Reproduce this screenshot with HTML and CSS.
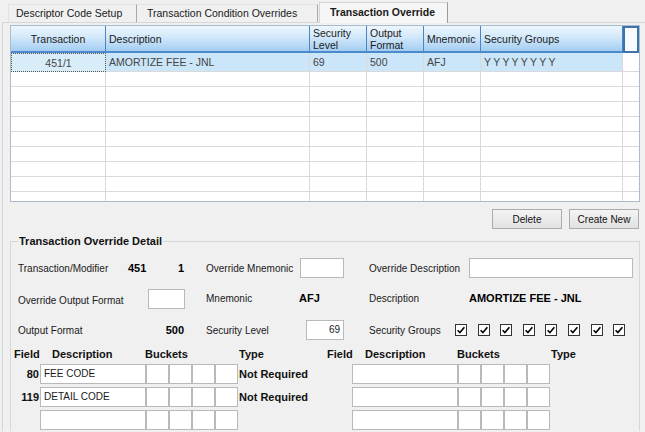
FILE: index.html
```html
<!DOCTYPE html>
<html>
<head>
<meta charset="utf-8">
<title>Transaction Override</title>
<link rel="stylesheet" href="styles.css">
</head>
<body>
<div class="tabs">
  <div class="tab first">Descriptor Code Setup</div>
  <div class="tab second">Transaction Condition Overrides</div>
  <div class="tab active">Transaction Override</div>
</div>
<div class="panel">
  <div class="grid">
    <div class="hd center">Transaction</div>
    <div class="hd">Description</div>
    <div class="hd two">Security<br>Level</div>
    <div class="hd two">Output<br>Format</div>
    <div class="hd">Mnemonic</div>
    <div class="hd">Security Groups</div>
    <div class="hd corner"></div>

    <div class="cell sel focus center">451/1</div>
    <div class="cell sel">AMORTIZE FEE - JNL</div>
    <div class="cell sel">69</div>
    <div class="cell sel">500</div>
    <div class="cell sel">AFJ</div>
    <div class="cell sel ys">YYYYYYYY</div>
    <div class="cell last"></div>

    <div class="cell"></div><div class="cell"></div><div class="cell"></div><div class="cell"></div><div class="cell"></div><div class="cell"></div><div class="cell last"></div>
    <div class="cell"></div><div class="cell"></div><div class="cell"></div><div class="cell"></div><div class="cell"></div><div class="cell"></div><div class="cell last"></div>
    <div class="cell"></div><div class="cell"></div><div class="cell"></div><div class="cell"></div><div class="cell"></div><div class="cell"></div><div class="cell last"></div>
    <div class="cell"></div><div class="cell"></div><div class="cell"></div><div class="cell"></div><div class="cell"></div><div class="cell"></div><div class="cell last"></div>
    <div class="cell"></div><div class="cell"></div><div class="cell"></div><div class="cell"></div><div class="cell"></div><div class="cell"></div><div class="cell last"></div>
    <div class="cell"></div><div class="cell"></div><div class="cell"></div><div class="cell"></div><div class="cell"></div><div class="cell"></div><div class="cell last"></div>
    <div class="cell"></div><div class="cell"></div><div class="cell"></div><div class="cell"></div><div class="cell"></div><div class="cell"></div><div class="cell last"></div>
    <div class="cell"></div><div class="cell"></div><div class="cell"></div><div class="cell"></div><div class="cell"></div><div class="cell"></div><div class="cell last"></div>
    <div class="cell end"></div><div class="cell end"></div><div class="cell end"></div><div class="cell end"></div><div class="cell end"></div><div class="cell end"></div><div class="cell end last"></div>
  </div>

  <div class="actions">
    <button class="btn">Delete</button>
    <button class="btn">Create New</button>
  </div>

  <fieldset class="detail">
    <legend>Transaction Override Detail</legend>
    <div class="form">
      <div class="pair"><span class="plabel">Transaction/Modifier</span><b>451</b></div>
      <div class="right"><b>1</b></div>
      <div></div>
      <div>Override Mnemonic</div>
      <div class="box w44"></div>
      <div></div>
      <div>Override Description</div>
      <div class="box w164"></div>

      <div class="lower">Override Output Format</div>
      <div class="box w37"></div>
      <div></div>
      <div class="upper">Mnemonic</div>
      <div class="upper"><b class="afj">AFJ</b></div>
      <div></div>
      <div class="upper">Description</div>
      <div class="upper"><b>AMORTIZE FEE - JNL</b></div>

      <div>Output Format</div>
      <div class="right"><b>500</b></div>
      <div></div>
      <div>Security Level</div>
      <div class="box w38 end num">69</div>
      <div></div>
      <div class="groups">
        <span class="glabel">Security Groups</span>
        <span class="checks">
          <span class="chk"><svg viewBox="0 0 12 12" width="12" height="12"><path d="M2.6 6.2 L4.9 8.6 L9.4 3.2" fill="none" stroke="#000" stroke-width="1.6"/></svg></span>
          <span class="chk"><svg viewBox="0 0 12 12" width="12" height="12"><path d="M2.6 6.2 L4.9 8.6 L9.4 3.2" fill="none" stroke="#000" stroke-width="1.6"/></svg></span>
          <span class="chk"><svg viewBox="0 0 12 12" width="12" height="12"><path d="M2.6 6.2 L4.9 8.6 L9.4 3.2" fill="none" stroke="#000" stroke-width="1.6"/></svg></span>
          <span class="chk"><svg viewBox="0 0 12 12" width="12" height="12"><path d="M2.6 6.2 L4.9 8.6 L9.4 3.2" fill="none" stroke="#000" stroke-width="1.6"/></svg></span>
          <span class="chk"><svg viewBox="0 0 12 12" width="12" height="12"><path d="M2.6 6.2 L4.9 8.6 L9.4 3.2" fill="none" stroke="#000" stroke-width="1.6"/></svg></span>
          <span class="chk"><svg viewBox="0 0 12 12" width="12" height="12"><path d="M2.6 6.2 L4.9 8.6 L9.4 3.2" fill="none" stroke="#000" stroke-width="1.6"/></svg></span>
          <span class="chk"><svg viewBox="0 0 12 12" width="12" height="12"><path d="M2.6 6.2 L4.9 8.6 L9.4 3.2" fill="none" stroke="#000" stroke-width="1.6"/></svg></span>
          <span class="chk"><svg viewBox="0 0 12 12" width="12" height="12"><path d="M2.6 6.2 L4.9 8.6 L9.4 3.2" fill="none" stroke="#000" stroke-width="1.6"/></svg></span>
        </span>
      </div>
    </div>

    <div class="fields">
      <div class="fh">Field</div>
      <div class="fh dl">Description</div>
      <div class="fh bk">Buckets</div>
      <div class="fh ty">Type</div>
      <div class="fh">Field</div>
      <div class="fh dr">Description</div>
      <div class="fh bk">Buckets</div>
      <div class="fh ty">Type</div>

      <div class="fnum">80</div>
      <div class="box desc">FEE CODE</div>
      <div class="box"></div><div class="box"></div><div class="box"></div><div class="box"></div>
      <div class="ftype">Not Required</div>
      <div></div>
      <div class="box desc"></div>
      <div class="box"></div><div class="box"></div><div class="box"></div><div class="box"></div>
      <div></div>

      <div class="fnum">119</div>
      <div class="box desc">DETAIL CODE</div>
      <div class="box"></div><div class="box"></div><div class="box"></div><div class="box"></div>
      <div class="ftype">Not Required</div>
      <div></div>
      <div class="box desc"></div>
      <div class="box"></div><div class="box"></div><div class="box"></div><div class="box"></div>
      <div></div>

      <div class="fnum"></div>
      <div class="box desc"></div>
      <div class="box"></div><div class="box"></div><div class="box"></div><div class="box"></div>
      <div></div>
      <div></div>
      <div class="box desc"></div>
      <div class="box"></div><div class="box"></div><div class="box"></div><div class="box"></div>
      <div></div>
    </div>
  </fieldset>
</div>
</body>
</html>
```
FILE: styles.css
```css
* { box-sizing: border-box; }

html, body {
  margin: 0;
  padding: 0;
}

body {
  width: 645px;
  height: 432px;
  overflow: hidden;
  background: #f0f0f0;
  font-family: "Liberation Sans", Arial, sans-serif;
  font-size: 11px;
  color: #000;
}

/* ---------- tabs ---------- */
.tabs {
  display: flex;
  align-items: flex-end;
  height: 22px;
  padding-left: 8px;
  font-size: 10.5px;
}

.tab {
  height: 18px;
  line-height: 17px;
  padding-left: 10px;
  background: #f0f0f0;
  border-top: 1px solid #e2e2e2;
  border-right: 1px solid #a8a8a8;
  color: #1a1a1a;
  white-space: nowrap;
}

.tab.first {
  width: 129px;
  padding-left: 7px;
  border-left: 1px solid #e2e2e2;
}

.tab.second {
  width: 181px;
}

.tab.active {
  position: relative;
  top: 1px;
  width: 129px;
  height: 21px;
  line-height: 18px;
  margin-left: 1px;
  font-weight: bold;
  background: #f6f6f6;
  border-top: 1px solid #d4d4d4;
  border-left: 1px solid #d4d4d4;
  border-right: 1px solid #9c9c9c;
}

/* ---------- panel ---------- */
.panel {
  margin-left: 2px;
  border-left: 1px solid #d6d6d6;
  border-top: 1px solid #d6d6d6;
  padding: 2px 0 0 7px;
  height: 409px;
  overflow: hidden;
}

/* ---------- data grid ---------- */
.grid {
  width: 630px;
  display: grid;
  grid-template-columns: 95px 204px 57px 57px 57px 142px 16px;
  grid-template-rows: 27px 19px repeat(8, 15px) 9px;
  border: 1px solid #a9bccd;
  background: #fff;
  color: #454545;
  font-size: 10.5px;
}

.hd {
  display: flex;
  align-items: center;
  padding-left: 3px;
  color: #1b1b1b;
  line-height: 12px;
  background: linear-gradient(to bottom, #edf6fd 0%, #d6eafb 40%, #b4d7f5 80%, #a4cdf1 100%);
  border-right: 1px solid #4886c9;
  border-bottom: 2px solid #4b8bcd;
}

.hd.center {
  justify-content: center;
  padding-left: 0;
}

.hd.corner {
  background: #f7fbfe;
  border: 2px solid #3e72ab;
}

.cell {
  display: flex;
  align-items: center;
  padding-left: 3px;
  white-space: nowrap;
  border-right: 1px solid #d9d9d9;
  border-bottom: 1px solid #dadada;
}

.cell.last {
  border-right: none;
}

.cell.end {
  border-bottom: none;
}

.cell.center {
  justify-content: center;
  padding-left: 0;
}

.cell.sel {
  background: #cbe6f8;
}

.cell.focus {
  background: #d9edf9;
  border: 1px dotted #555;
}

.cell.ys {
  letter-spacing: 2.2px;
}

/* ---------- actions ---------- */
.actions {
  width: 630px;
  display: flex;
  justify-content: flex-end;
  gap: 7px;
  padding-right: 1px;
  margin-top: 7px;
}

.btn {
  width: 70px;
  height: 20px;
  padding: 0;
  font-family: "Liberation Sans", Arial, sans-serif;
  font-size: 10px;
  color: #111;
  background: linear-gradient(to bottom, #f4f4f4, #e2e2e2);
  border: 1px solid #acacac;
  border-radius: 0;
}

/* ---------- detail group ---------- */
.detail {
  width: 630px;
  margin: 6px 0 0 0;
  padding: 10px 0 0 7px;
  border: 1px solid #d7d7d7;
  height: 200px;
  min-inline-size: 0;
}

.detail legend {
  font-weight: bold;
  padding: 0 1px;
  line-height: 13px;
  color: #111;
}

.form {
  display: grid;
  grid-template-columns: 130px 38px 20px 94px 44px 25px 100px 164px;
  grid-auto-rows: 20px;
  row-gap: 11px;
  align-items: center;
  color: #1a1a1a;
  font-size: 10px;
  white-space: nowrap;
}

.form b {
  color: #000;
  font-size: 11px;
}

.pair {
  display: flex;
  align-items: center;
}

.plabel {
  width: 110px;
}

.right {
  text-align: right;
  padding-right: 2px;
}

.lower {
  padding-top: 3px;
}

.upper {
  padding-bottom: 2px;
}

.afj {
  margin-left: -1px;
}

.box {
  height: 20px;
  background: #fff;
  border: 1px solid #b9b9b9;
}

.w44 { width: 44px; }
.w164 { width: 164px; }
.w37 { width: 37px; }
.w38 { width: 38px; }

.box.end {
  justify-self: end;
}

.box.num {
  text-align: right;
  padding-right: 3px;
  line-height: 18px;
}

.groups {
  grid-column: 7 / span 2;
  display: flex;
  align-items: center;
}

.glabel {
  width: 86px;
}

.checks {
  display: flex;
  gap: 10.6px;
}

.chk {
  display: block;
  width: 12px;
  height: 12px;
  border: 1px solid #333;
  background: #fff;
}

.chk svg {
  display: block;
  margin: -1px 0 0 -1px;
}

/* ---------- fields table ---------- */
.fields {
  margin-left: -4px;
  margin-top: 7px;
  display: grid;
  grid-template-columns: 26px 106px 23px 23px 23px 23px 89px 25px 106px 23px 23px 23px 23px 1fr;
  grid-template-rows: 14px repeat(3, 20px);
  row-gap: 3px;
  align-items: center;
  color: #111;
}

.fh {
  font-weight: bold;
  white-space: nowrap;
}

.fh.dl { padding-left: 12px; }
.fh.dr { padding-left: 13px; }
.fh.bk { grid-column: span 4; margin-left: -1px; }
.fh.ty { padding-left: 1px; }

.fnum {
  text-align: right;
  padding-right: 1px;
  font-weight: bold;
}

.box.desc {
  padding-left: 3px;
  line-height: 18px;
  white-space: nowrap;
  color: #1a1a1a;
  font-size: 10px;
}

.ftype {
  font-weight: bold;
  padding-left: 1px;
  white-space: nowrap;
}
```
